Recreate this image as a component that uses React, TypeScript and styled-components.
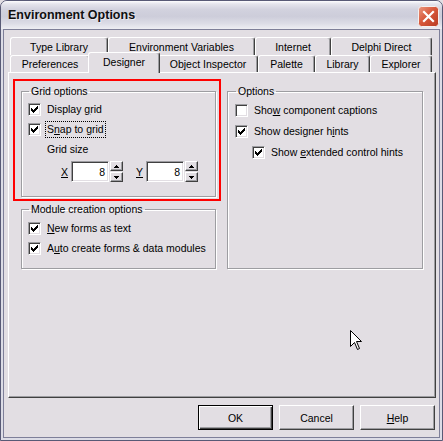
import React from "react";
import styled, { createGlobalStyle, css } from "styled-components";

const FACE = "#e2dee3";

const GlobalStyle = createGlobalStyle`
  html, body {
    margin: 0;
    padding: 0;
    overflow: hidden;
    background: ${FACE};
  }
  body {
    font-family: "Liberation Sans", Arial, sans-serif;
    font-size: 10.5px;
    color: #000;
  }
`;

const tabRows = [
  [
    { label: "Type Library", w: 98 },
    { label: "Environment Variables", w: 147 },
    { label: "Internet", w: 76 },
    { label: "Delphi Direct", w: 101 },
  ],
  [
    { label: "Preferences", w: 80 },
    { label: "Designer", w: 68, active: true },
    { label: "Object Inspector", w: 100 },
    { label: "Palette", w: 57 },
    { label: "Library", w: 55 },
    { label: "Explorer", w: 62 },
  ],
];

const Check = () => (
  <svg width="7" height="7" viewBox="0 0 7 7" shapeRendering="crispEdges">
    {[2, 3, 4, 3, 2, 1, 0].map((y, x) => (
      <rect key={x} x={x} y={y} width="1" height="3" fill="#000" />
    ))}
  </svg>
);

const Arrow = ({ up }: { up?: boolean }) => (
  <svg width="5" height="3" viewBox="0 0 5 3" shapeRendering="crispEdges">
    <path d={up ? "M2 0h1v1h1v1h1v1H0V2h1V1h1z" : "M0 0h5v1H4v1H3v1H2V2H1V1H0z"} fill="#000" />
  </svg>
);

const CheckBox = ({ checked, children, focus }: { checked?: boolean; children: React.ReactNode; focus?: boolean }) => (
  <Row>
    <Box>{checked && <Check />}</Box>
    <Label $focus={focus}>{children}</Label>
  </Row>
);

const Spin = ({ name, value }: { name: string; value: string }) => (
  <>
    <AxisLabel>
      <Key>{name}</Key>
    </AxisLabel>
    <Edit>{value}</Edit>
    <Spinner>
      <SpinButton>
        <Arrow up />
      </SpinButton>
      <SpinButton>
        <Arrow />
      </SpinButton>
    </Spinner>
  </>
);

export default function App() {
  return (
    <>
      <GlobalStyle />
      <Window>
        <TitleBar>
          <Title>Environment Options</Title>
          <CloseButton>
            <svg width="21" height="21" viewBox="0 0 21 21">
              <defs>
                <linearGradient id="closeGrad" x1="0" y1="0" x2="1" y2="1">
                  <stop offset="0" stopColor="#eb9a82" />
                  <stop offset="0.45" stopColor="#d8593c" />
                  <stop offset="1" stopColor="#b83a22" />
                </linearGradient>
              </defs>
              <rect x="0.5" y="0.5" width="20" height="20" rx="3" fill="url(#closeGrad)" stroke="#f4f0f0" />
              <path d="M6 6L15 15M15 6L6 15" stroke="#fff" strokeWidth="2.2" strokeLinecap="square" />
            </svg>
          </CloseButton>
        </TitleBar>
        <Frame>
          <Client>
            <TabStrip>
              {tabRows.map((row, i) => (
                <TabRow key={i} $h={i === 0 ? 18 : 17}>
                  {row.map((t) => (
                    <Tab key={t.label} $w={t.w} $active={"active" in t && t.active}>
                      {t.label}
                    </Tab>
                  ))}
                </TabRow>
              ))}
            </TabStrip>
            <Panel>
              <LeftColumn>
                <Highlight>
                  <Group $w={195} $h={112}>
                    <Legend>Grid options</Legend>
                    <Stack $gap={3} $top={3}>
                      <CheckBox checked>
                        Display <Key>g</Key>rid
                      </CheckBox>
                      <CheckBox checked focus>
                        S<Key>n</Key>ap to grid
                      </CheckBox>
                      <Caption>Grid size</Caption>
                      <SpinRow>
                        <Spin name="X" value="8" />
                        <Spacer />
                        <Spin name="Y" value="8" />
                      </SpinRow>
                    </Stack>
                  </Group>
                </Highlight>
                <ModuleGroup $w={195} $h={66}>
                  <Legend>Module creation options</Legend>
                  <Stack $gap={3} $top={4}>
                    <CheckBox checked>
                      <Key>N</Key>ew forms as text
                    </CheckBox>
                    <CheckBox checked>
                      A<Key>u</Key>to create forms &amp; data modules
                    </CheckBox>
                  </Stack>
                </ModuleGroup>
              </LeftColumn>
              <OptionsGroup $w={196} $h={184}>
                <Legend>Options</Legend>
                <Stack $gap={4} $top={4}>
                  <CheckBox>
                    Sho<Key>w</Key> component captions
                  </CheckBox>
                  <CheckBox checked>
                    Show designer h<Key>i</Key>nts
                  </CheckBox>
                  <Indent>
                    <CheckBox checked>
                      Show <Key>e</Key>xtended control hints
                    </CheckBox>
                  </Indent>
                </Stack>
              </OptionsGroup>
            </Panel>
            <ButtonBar>
              <Button $default>OK</Button>
              <Button>Cancel</Button>
              <Button>
                <Key>H</Key>elp
              </Button>
            </ButtonBar>
          </Client>
        </Frame>
        <Cursor>
          <svg width="12" height="20" viewBox="0 0 12 20">
            <path d="M0.5 0.5V16.5L4.5 12.5L7.5 19.5L9.5 18.5L6.5 11.5H11.5Z" fill="#fff" stroke="#000" />
          </svg>
        </Cursor>
      </Window>
    </>
  );
}

const Window = styled.div`
  position: relative;
  box-sizing: border-box;
  width: 443px;
  height: 441px;
  display: flex;
  flex-direction: column;
  border: 1px solid #585a76;
  border-radius: 7px 7px 0 0;
  background: #d6d6e1;
  overflow: hidden;
`;

const TitleBar = styled.div`
  height: 28px;
  flex: none;
  display: flex;
  align-items: center;
  justify-content: space-between;
  padding: 0 3px 0 7px;
  background: linear-gradient(
    #fdfdfe 0,
    #e4e4ec 3px,
    #d2d2de 30%,
    #cdcdda 55%,
    #dcdce6 80%,
    #eeeef3 100%
  );
`;

const Title = styled.span`
  font-family: "Liberation Sans", Arial, sans-serif;
  font-weight: bold;
  font-size: 12.5px;
  color: #101010;
  text-shadow: 1px 1px 0 rgba(255, 255, 255, 0.6);
`;

const CloseButton = styled.div`
  width: 21px;
  height: 21px;
  margin-top: 2px;
  line-height: 0;
`;

const Frame = styled.div`
  flex: 1;
  display: flex;
  padding: 0 2px 2px;
  background: #dcdce6;
`;

const Client = styled.div`
  flex: 1;
  display: flex;
  flex-direction: column;
  border: 1px solid #7e7f99;
  background: ${FACE};
  padding: 7px 3px 0 4px;
`;

const TabStrip = styled.div`
  display: flex;
  flex-direction: column;
  padding: 0 2px;
`;

const TabRow = styled.div<{ $h: number }>`
  display: flex;
  height: ${(p) => p.$h}px;
`;

const Tab = styled.div<{ $w: number; $active?: boolean }>`
  box-sizing: border-box;
  width: ${(p) => p.$w}px;
  height: 100%;
  display: flex;
  align-items: center;
  justify-content: center;
  white-space: nowrap;
  background: ${FACE};
  border-top: 1px solid #fff;
  border-left: 1px solid #fff;
  border-right: 1px solid #404040;
  border-radius: 3px 3px 0 0;
  box-shadow: inset -1px 0 0 #9d9da1;
  ${(p) =>
    p.$active &&
    css`
      position: relative;
      z-index: 1;
      width: ${p.$w + 4}px;
      height: calc(100% + 4px);
      margin: -3px -2px 0;
      padding-bottom: 3px;
    `}
`;

const Panel = styled.div`
  box-sizing: border-box;
  height: 326px;
  flex: none;
  display: flex;
  align-items: flex-start;
  padding: 6px 0 0 4px;
  border: 1px solid;
  border-color: #fff #404040 #404040 #fff;
  box-shadow: inset -1px -1px 0 #9d9da1;
`;

const LeftColumn = styled.div`
  width: 208px;
  display: flex;
  flex-direction: column;
`;

const Highlight = styled.div`
  box-sizing: border-box;
  width: 208px;
  border: 2px solid #ff0000;
  padding: 4px 0 2px 6px;
`;

const Group = styled.fieldset<{ $w: number; $h: number }>`
  box-sizing: border-box;
  width: ${(p) => p.$w}px;
  height: ${(p) => p.$h}px;
  min-width: 0;
  margin: 0;
  padding: 0 6px;
  border: 1px solid #9d9da1;
  box-shadow: 1px 1px 0 #fff, inset 1px 1px 0 #fff;
`;

const ModuleGroup = styled(Group)`
  margin: 2px 0 0 8px;
`;

const OptionsGroup = styled(Group)`
  margin: 6px 0 0 6px;
  padding: 0 7px;
`;

const Legend = styled.legend`
  padding: 0 2px;
  margin-left: 1px;
  line-height: 13px;
  font-size: 10.5px;
`;

const Stack = styled.div<{ $gap: number; $top: number }>`
  display: flex;
  flex-direction: column;
  gap: ${(p) => p.$gap}px;
  padding-top: ${(p) => p.$top}px;
`;

const Row = styled.div`
  height: 17px;
  display: flex;
  align-items: center;
`;

const Indent = styled.div`
  padding-left: 17px;
`;

const Box = styled.span`
  box-sizing: border-box;
  flex: none;
  width: 13px;
  height: 13px;
  display: flex;
  align-items: center;
  justify-content: center;
  background: #fff;
  border: 1px solid;
  border-color: #9d9da1 #fff #fff #9d9da1;
  box-shadow: inset 1px 1px 0 #404040, inset -1px -1px 0 ${FACE};
`;

const Label = styled.span<{ $focus?: boolean }>`
  margin-left: 4px;
  padding: 0 1px;
  line-height: 15px;
  white-space: nowrap;
  border: 1px ${(p) => (p.$focus ? "dotted #000" : "solid transparent")};
`;

const Key = styled.span`
  text-decoration: underline;
`;

const Caption = styled.div`
  height: 17px;
  line-height: 17px;
  padding-left: 19px;
`;

const SpinRow = styled.div`
  height: 21px;
  display: flex;
  align-items: stretch;
  padding-left: 33px;
`;

const AxisLabel = styled.span`
  width: 10px;
  display: flex;
  align-items: center;
`;

const Edit = styled.div`
  box-sizing: border-box;
  width: 38px;
  display: flex;
  align-items: center;
  justify-content: flex-end;
  padding-right: 3px;
  background: #fff;
  border: 1px solid;
  border-color: #9d9da1 #fff #fff #9d9da1;
  box-shadow: inset 1px 1px 0 #404040, inset -1px -1px 0 ${FACE};
`;

const Spinner = styled.div`
  width: 13px;
  margin-left: 1px;
  display: flex;
  flex-direction: column;
  gap: 1px;
`;

const SpinButton = styled.span`
  box-sizing: border-box;
  height: 10px;
  display: flex;
  align-items: center;
  justify-content: center;
  background: ${FACE};
  border: 1px solid;
  border-color: #fff #404040 #404040 #fff;
  box-shadow: inset -1px -1px 0 #9d9da1;
`;

const Spacer = styled.span`
  width: 13px;
`;

const ButtonBar = styled.div`
  display: flex;
  justify-content: flex-end;
  gap: 6px;
  margin: 7px 1px 0 0;
`;

const Button = styled.button<{ $default?: boolean }>`
  box-sizing: border-box;
  width: 75px;
  height: 25px;
  padding: 0;
  font-family: "Liberation Sans", Arial, sans-serif;
  font-size: 10.5px;
  color: #000;
  background: ${FACE};
  border: 1px solid;
  border-color: #fff #404040 #404040 #fff;
  box-shadow: inset -1px -1px 0 #9d9da1;
  ${(p) =>
    p.$default &&
    css`
      border: 1px solid #000;
      box-shadow: inset 1px 1px 0 #fff, inset -1px -1px 0 #404040, inset -2px -2px 0 #9d9da1;
    `}
`;

const Cursor = styled.div`
  position: absolute;
  left: 349px;
  top: 329px;
  line-height: 0;
  pointer-events: none;
`;
